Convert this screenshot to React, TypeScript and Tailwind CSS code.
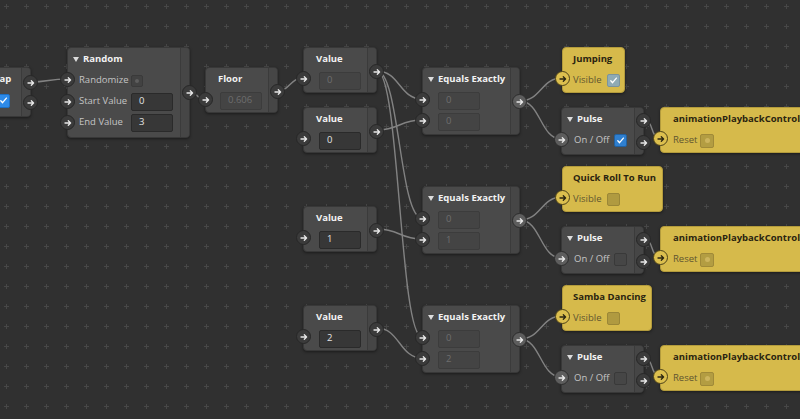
import React from 'react';

type PortKind = 'gray' | 'lit' | 'yellow';
type CheckKind = 'blue' | 'paleblue' | 'olive' | 'dark';

const portStyle: Record<PortKind, string> = {
    gray: 'bg-[#3b3b3b] border-[#272727]',
    lit: 'bg-[#5d5d5d] border-[#2c2c2c]',
    yellow: 'bg-[#dcbf4e] border-[#4d4219]',
};

const checkStyle: Record<CheckKind, string> = {
    blue: 'bg-[#2f7fcf] border-[#22609e]',
    paleblue: 'bg-[#8fabb5] border-[#7b949c]',
    olive: 'bg-[#b09a40] border-[#9b8737]',
    dark: 'bg-[#464646] border-[#393939]',
};

const Arrow: React.FC<{ color: string }> = ({ color }) => (
    <svg width="8" height="8" viewBox="0 0 8 8" fill="none" stroke={color} strokeWidth="1.3" strokeLinecap="round" strokeLinejoin="round">
        <path d="M1 4h5.6M4.3 1.7L6.6 4 4.3 6.3" />
    </svg>
);

const Port: React.FC<{ side: 'left' | 'right'; top: number; kind?: PortKind }> = ({ side, top, kind = 'gray' }) => (
    <div
        className={`absolute z-10 w-[15px] h-[15px] rounded-full border flex items-center justify-center ${side === 'left' ? 'left-[-8px]' : 'right-[-8px]'} ${portStyle[kind]}`}
        style={{ top: top - 8 }}
    >
        <Arrow color={kind === 'yellow' ? '#2b2612' : '#e8e8e8'} />
    </div>
);

const CheckMark = () => (
    <svg width="9" height="9" viewBox="0 0 9 9" fill="none" stroke="#ffffff" strokeWidth="1.3" strokeLinecap="round" strokeLinejoin="round">
        <path d="M1.8 4.8l1.8 1.9 3.8-4.6" />
    </svg>
);

const Check: React.FC<{ kind: CheckKind; checked?: boolean; className?: string }> = ({ kind, checked, className = '' }) => (
    <div className={`w-[13px] h-[13px] rounded-[2px] border flex items-center justify-center ${checkStyle[kind]} ${className}`}>
        {checked && <CheckMark />}
    </div>
);

const Triangle = () => (
    <span className="w-0 h-0 border-l-[3px] border-r-[3px] border-t-[5px] border-l-transparent border-r-transparent border-t-[#dcdcdc]" />
);

const Field: React.FC<{ value: string; disabled?: boolean; className?: string }> = ({ value, disabled, className = '' }) => (
    <div
        className={`w-[42px] h-[18px] rounded-[2px] border flex items-center pl-[7px] text-[9.5px] ${
            disabled ? 'bg-[#444444] border-[#3c3c3c] text-[#6e6e6e]' : 'bg-[#373737] border-[#2a2a2a] text-[#e4e4e4]'
        } ${className}`}
    >
        {value}
    </div>
);

const GrayNode: React.FC<{
    x: number;
    y: number;
    w: number;
    h: number;
    ins?: number[];
    insKind?: PortKind;
    outs?: number[];
    outKind?: PortKind;
    children: React.ReactNode;
}> = ({ x, y, w, h, ins = [], insKind = 'gray', outs = [], outKind = 'gray', children }) => (
    <div
        className="absolute flex rounded-[4px] border border-[#383838] bg-[#4a4a4a] shadow-[0_1px_3px_rgba(0,0,0,0.45)]"
        style={{ left: x, top: y, width: w, height: h }}
    >
        <div className="flex-1 flex flex-col">{children}</div>
        <div className="w-[9px] border-l border-[#3b3b3b] bg-[#464646] rounded-r-[3px]" />
        {ins.map((t) => (
            <Port key={`i${t}`} side="left" top={t} kind={insKind} />
        ))}
        {outs.map((t) => (
            <Port key={`o${t}`} side="right" top={t} kind={outKind} />
        ))}
    </div>
);

const YellowNode: React.FC<{ x: number; y: number; w: number; title: string; pad?: string; children: React.ReactNode }> = ({
    x,
    y,
    w,
    title,
    pad = 'pl-[10px]',
    children,
}) => (
    <div
        className="absolute flex flex-col rounded-[4px] border border-[#b39b3c] bg-[#d6ba4b] shadow-[0_1px_3px_rgba(0,0,0,0.45)] whitespace-nowrap"
        style={{ left: x, top: y, width: w, height: 46 }}
    >
        <div className={`h-[22px] flex items-center text-[9.5px] font-bold text-[#2a2410] ${pad}`}>{title}</div>
        <div className={`h-[21px] flex items-center text-[9.5px] text-[#5f5530] ${pad}`}>{children}</div>
        <Port side="left" top={31} kind="yellow" />
    </div>
);

const TitleRow: React.FC<{ title: string; arrow?: boolean; pad?: string }> = ({ title, arrow, pad }) => (
    <div
        className={`h-[22px] flex items-center text-[9.5px] font-bold text-[#f2f2f2] whitespace-nowrap ${
            pad ?? (arrow ? 'pl-[5px] gap-[4px]' : 'pl-[12px]')
        }`}
    >
        {arrow && <Triangle />}
        {title}
    </div>
);

const ValueNode: React.FC<{ y: number; value: string; disabled?: boolean }> = ({ y, value, disabled }) => (
    <GrayNode x={303} y={y} w={74} h={46} ins={[31]} outs={[24]}>
        <TitleRow title="Value" />
        <div className="h-[21px] flex items-center">
            <Field value={value} disabled={disabled} className="ml-[15px]" />
        </div>
    </GrayNode>
);

const EqualsNode: React.FC<{ y: number; a: string; b: string }> = ({ y, a, b }) => (
    <GrayNode x={422} y={y} w={98} h={68} ins={[32, 53]} outs={[34]} outKind="lit">
        <TitleRow title="Equals Exactly" arrow />
        <div className="h-[21px] flex items-center">
            <Field value={a} disabled className="ml-[15px]" />
        </div>
        <div className="h-[21px] flex items-center">
            <Field value={b} disabled className="ml-[15px]" />
        </div>
    </GrayNode>
);

const PulseNode: React.FC<{ y: number; kind: CheckKind; checked?: boolean }> = ({ y, kind, checked }) => (
    <GrayNode x={561} y={y} w={83} h={48} ins={[32]} insKind="lit" outs={[13, 35]}>
        <TitleRow title="Pulse" arrow />
        <div className="h-[21px] flex items-center pl-[12px] text-[9.5px] text-[#c4c4c4] whitespace-nowrap">
            <span className="w-[40px]">On / Off</span>
            <Check kind={kind} checked={checked} />
        </div>
    </GrayNode>
);

const AnimNode: React.FC<{ y: number }> = ({ y }) => (
    <YellowNode x={660} y={y} w={170} title="animationPlaybackController" pad="pl-[12px]">
        <span>Reset</span>
        <div className="ml-[3px] w-[14px] h-[14px] rounded-[2px] border border-[#a08a38] bg-[#b39d42] flex items-center justify-center">
            <div className="w-[5px] h-[5px] rounded-full bg-[#cdb55e]" />
        </div>
    </YellowNode>
);

const wire = (x1: number, y1: number, x2: number, y2: number) => {
    const d = Math.max(Math.abs(x2 - x1) * 0.5, 10);
    return `M${x1} ${y1} C${x1 + d} ${y1} ${x2 - d} ${y2} ${x2} ${y2}`;
};

const rows = [0, 119, 238];

const wires: [number, number, number, number][] = [
    [30, 82, 67, 79],
    [189, 92, 205, 99],
    [277, 91, 303, 78],
    [377, 71, 422, 99],
    [377, 71, 422, 218],
    [377, 71, 422, 337],
    [377, 130, 422, 120],
    [377, 229, 422, 239],
    [377, 328, 422, 358],
    ...rows.flatMap((r): [number, number, number, number][] => [
        [520, 101 + r, 562, 78 + r],
        [520, 101 + r, 561, 139 + r],
        [644, 120 + r, 660, 138 + r],
    ]),
];

const App: React.FC = () => {
    return (
        <div className="relative w-[800px] h-[419px] overflow-hidden bg-[#303030] font-['Open_Sans',sans-serif]">
            {/* grid of plus marks */}
            <svg className="absolute inset-0" width="800" height="419">
                <defs>
                    <pattern id="grid" width="20" height="20" patternUnits="userSpaceOnUse">
                        <path d="M4 6.5h5M6.5 4v5" stroke="#474747" strokeWidth="1" />
                    </pattern>
                </defs>
                <rect width="800" height="419" fill="url(#grid)" />
            </svg>

            {/* wires */}
            <svg className="absolute inset-0" width="800" height="419" fill="none">
                {wires.map(([a, b, c, d], i) => (
                    <path key={i} d={wire(a, b, c, d)} stroke="#828282" strokeWidth="1.4" />
                ))}
            </svg>

            {/* Tap */}
            <GrayNode x={-40} y={67} w={71} h={50} outs={[15, 35]}>
                <TitleRow title="Tap" pad="pl-[33px]" />
                <div className="h-[21px] flex items-center">
                    <div className="ml-[35px] w-[14px] h-[14px] rounded-[2px] border border-[#1c6fc4] bg-[#2d8ae8] flex items-center justify-center">
                        <CheckMark />
                    </div>
                </div>
            </GrayNode>

            {/* Random */}
            <GrayNode x={67} y={47} w={123} h={91} ins={[32, 54, 75]} outs={[45]}>
                <TitleRow title="Random" arrow />
                <div className="h-[21px] flex items-center pl-[11px] text-[9.5px] text-[#c4c4c4]">
                    <span className="w-[52px]">Randomize</span>
                    <div className="w-[12px] h-[12px] rounded-[2px] border border-[#3a3a3a] bg-[#424242] flex items-center justify-center">
                        <div className="w-[4px] h-[4px] rounded-full bg-[#5e5e5e]" />
                    </div>
                </div>
                <div className="h-[21px] flex items-center pl-[11px] text-[9.5px] text-[#c4c4c4]">
                    <span className="w-[52px]">Start Value</span>
                    <Field value="0" />
                </div>
                <div className="h-[21px] flex items-center pl-[11px] text-[9.5px] text-[#c4c4c4]">
                    <span className="w-[52px]">End Value</span>
                    <Field value="3" />
                </div>
            </GrayNode>

            {/* Floor */}
            <GrayNode x={205} y={67} w={73} h={46} ins={[32]} outs={[24]}>
                <TitleRow title="Floor" />
                <div className="h-[21px] flex items-center">
                    <Field value="0.606" disabled className="ml-[14px]" />
                </div>
            </GrayNode>

            <ValueNode y={47} value="0" disabled />
            <ValueNode y={107} value="0" />
            <ValueNode y={206} value="1" />
            <ValueNode y={305} value="2" />

            <EqualsNode y={67} a="0" b="0" />
            <EqualsNode y={186} a="0" b="1" />
            <EqualsNode y={305} a="0" b="2" />

            <YellowNode x={562} y={47} w={63} title="Jumping">
                <span>Visible</span>
                <Check kind="paleblue" checked className="ml-[5px]" />
            </YellowNode>
            <YellowNode x={562} y={166} w={101} title="Quick Roll To Run">
                <span>Visible</span>
                <Check kind="olive" className="ml-[5px]" />
            </YellowNode>
            <YellowNode x={562} y={285} w={90} title="Samba Dancing">
                <span>Visible</span>
                <Check kind="olive" className="ml-[5px]" />
            </YellowNode>

            <PulseNode y={107} kind="blue" checked />
            <PulseNode y={226} kind="dark" />
            <PulseNode y={345} kind="dark" />

            <AnimNode y={107} />
            <AnimNode y={226} />
            <AnimNode y={345} />
        </div>
    );
};

export default App;
